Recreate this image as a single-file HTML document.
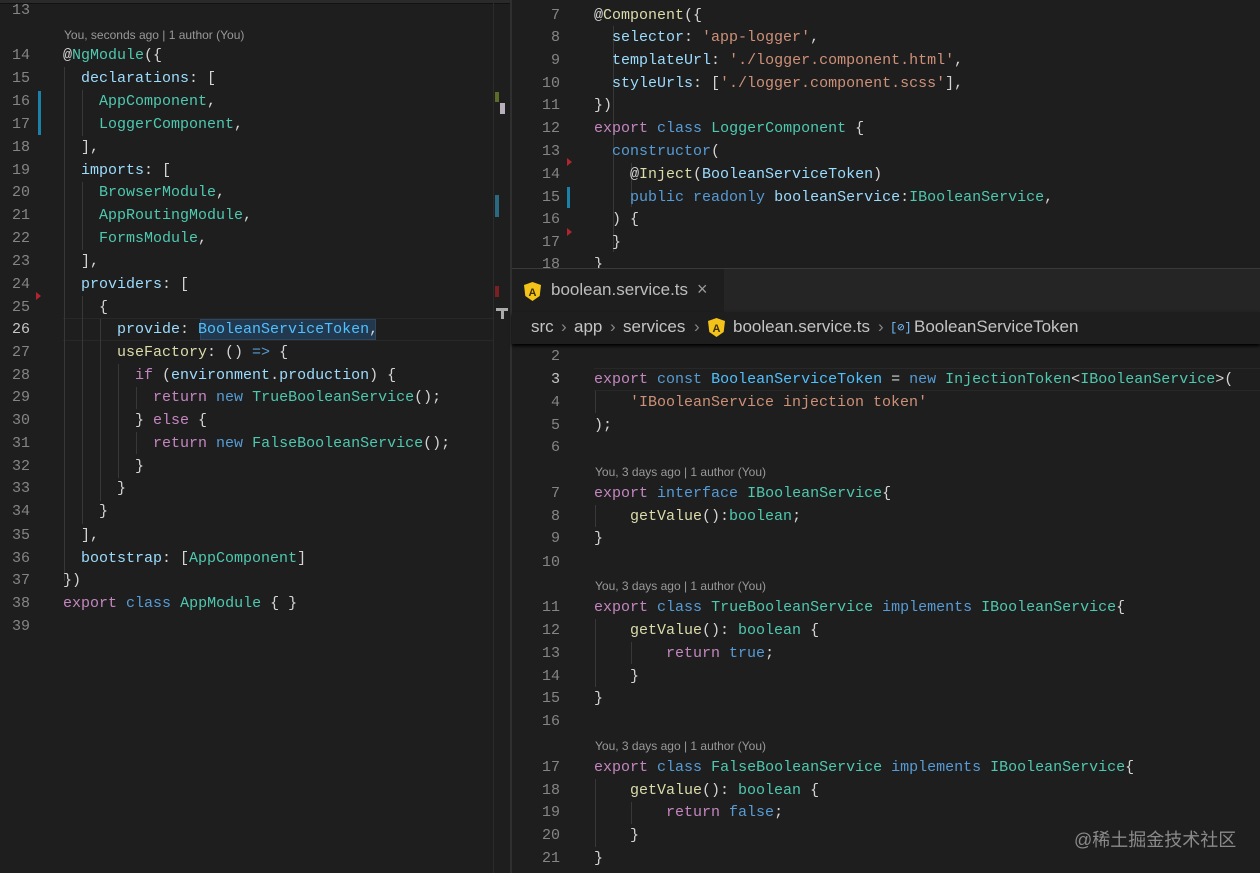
<!DOCTYPE html>
<html><head><meta charset="utf-8"><style>
*{margin:0;padding:0;box-sizing:border-box}
body{width:1260px;height:873px;background:#1e1e1e;position:relative;overflow:hidden;font-family:"Liberation Mono",monospace;font-size:15px;color:#d4d4d4}
.l{position:absolute;height:23px;line-height:23px;white-space:pre}
.n{position:absolute;height:23px;line-height:23px;color:#858585;text-align:right;width:30px}
.lens{position:absolute;font-family:"Liberation Sans",sans-serif;font-size:12px;color:#999;line-height:16px}
.k{color:#c586c0}.b{color:#569cd6}.t{color:#4ec9b0}.p{color:#9cdcfe}.f{color:#dcdcaa}.s{color:#ce9178}
.g{position:absolute;width:1px;background:#383838}
.bc{position:absolute;top:317px;font-family:'Liberation Sans',sans-serif;font-size:17px;color:#c4c4c4;white-space:pre}
.sep{position:absolute;top:317px;font-family:'Liberation Sans',sans-serif;font-size:17px;color:#888}
</style></head><body>
<!-- left pane -->
<div style="position:absolute;left:0;top:0;width:510px;height:4px;background:#2a2a2a"></div>
<div style="position:absolute;left:0;top:3px;width:510px;height:1px;background:#111"></div>
<div style="position:absolute;left:493px;top:0;width:1px;height:873px;background:#2b2b2b"></div>
<div style="position:absolute;left:510px;top:0;width:2px;height:873px;background:#2f2f2f"></div>
<div style="position:absolute;left:38px;top:91px;width:3px;height:44px;background:#1b81a8"></div>
<div style="position:absolute;left:495px;top:92px;width:4px;height:10px;background:#5b6b2a"></div>
<div style="position:absolute;left:500px;top:103px;width:5px;height:11px;background:#b9b0bd"></div>
<div style="position:absolute;left:495px;top:195px;width:4px;height:22px;background:#2a6a80"></div>
<div style="position:absolute;left:495px;top:286px;width:4px;height:11px;background:#7a2020"></div>
<div style="position:absolute;left:496px;top:308px;width:12px;height:3px;background:#aaa"></div>
<div style="position:absolute;left:501px;top:308px;width:3px;height:11px;background:#aaa"></div>
<div style="position:absolute;left:36px;top:292px;width:0;height:0;border-top:4px solid transparent;border-bottom:4px solid transparent;border-left:5px solid #b0262e"></div>
<div style="position:absolute;left:63px;top:318px;width:430px;height:23px;border-top:1px solid #282828;border-bottom:1px solid #282828"></div>
<div style="position:absolute;left:200px;top:319px;width:176px;height:21px;background:#264f78;opacity:.55;border:1px solid #3a6d99"></div>
<div class="g" style="left:64px;top:67px;height:514px"></div>
<div class="g" style="left:82px;top:90px;height:46px"></div>
<div class="g" style="left:82px;top:182px;height:68px"></div>
<div class="g" style="left:82px;top:296px;height:228px"></div>
<div class="g" style="left:100px;top:319px;height:182px"></div>
<div class="g" style="left:118px;top:364px;height:114px"></div>
<div class="g" style="left:136px;top:387px;height:22px"></div>
<div class="g" style="left:136px;top:432px;height:22px"></div>

<div class="n" style="top:-1px">13</div>
<div class="lens" style="left:64px;top:27px">You, seconds ago | 1 author (You)</div>
<div class="n" style="top:44px">14</div><div class="l" style="left:63px;top:44px">@<span class="t">NgModule</span>({</div>
<div class="n" style="top:67px">15</div><div class="l" style="left:63px;top:67px">  <span class="p">declarations</span>: [</div>
<div class="n" style="top:90px">16</div><div class="l" style="left:63px;top:90px">    <span class="t">AppComponent</span>,</div>
<div class="n" style="top:113px">17</div><div class="l" style="left:63px;top:113px">    <span class="t">LoggerComponent</span>,</div>
<div class="n" style="top:136px">18</div><div class="l" style="left:63px;top:136px">  ],</div>
<div class="n" style="top:159px">19</div><div class="l" style="left:63px;top:159px">  <span class="p">imports</span>: [</div>
<div class="n" style="top:181px">20</div><div class="l" style="left:63px;top:181px">    <span class="t">BrowserModule</span>,</div>
<div class="n" style="top:204px">21</div><div class="l" style="left:63px;top:204px">    <span class="t">AppRoutingModule</span>,</div>
<div class="n" style="top:227px">22</div><div class="l" style="left:63px;top:227px">    <span class="t">FormsModule</span>,</div>
<div class="n" style="top:250px">23</div><div class="l" style="left:63px;top:250px">  ],</div>
<div class="n" style="top:273px">24</div><div class="l" style="left:63px;top:273px">  <span class="p">providers</span>: [</div>
<div class="n" style="top:296px">25</div><div class="l" style="left:63px;top:296px">    {</div>
<div class="n" style="top:318px;color:#c6c6c6">26</div><div class="l" style="left:63px;top:318px">      <span class="p">provide</span>: <span class="p" style="color:#4fc1ff">BooleanServiceToken</span>,</div>
<div class="n" style="top:341px">27</div><div class="l" style="left:63px;top:341px">      <span class="f">useFactory</span>: () <span class="b">=&gt;</span> {</div>
<div class="n" style="top:364px">28</div><div class="l" style="left:63px;top:364px">        <span class="k">if</span> (<span class="p">environment</span>.<span class="p">production</span>) {</div>
<div class="n" style="top:386px">29</div><div class="l" style="left:63px;top:386px">          <span class="k">return</span> <span class="b">new</span> <span class="t">TrueBooleanService</span>();</div>
<div class="n" style="top:409px">30</div><div class="l" style="left:63px;top:409px">        } <span class="k">else</span> {</div>
<div class="n" style="top:432px">31</div><div class="l" style="left:63px;top:432px">          <span class="k">return</span> <span class="b">new</span> <span class="t">FalseBooleanService</span>();</div>
<div class="n" style="top:455px">32</div><div class="l" style="left:63px;top:455px">        }</div>
<div class="n" style="top:477px">33</div><div class="l" style="left:63px;top:477px">      }</div>
<div class="n" style="top:500px">34</div><div class="l" style="left:63px;top:500px">    }</div>
<div class="n" style="top:524px">35</div><div class="l" style="left:63px;top:524px">  ],</div>
<div class="n" style="top:547px">36</div><div class="l" style="left:63px;top:547px">  <span class="p">bootstrap</span>: [<span class="t">AppComponent</span>]</div>
<div class="n" style="top:569px">37</div><div class="l" style="left:63px;top:569px">})</div>
<div class="n" style="top:592px">38</div><div class="l" style="left:63px;top:592px"><span class="k">export</span> <span class="b">class</span> <span class="t">AppModule</span> { }</div>
<div class="n" style="top:615px">39</div>

<!-- right top pane -->
<div style="position:absolute;left:512px;top:0;width:748px">
<div class="g" style="left:101px;top:26px;height:226px"></div>
<div class="g" style="left:119px;top:163px;height:44px"></div>
</div>
<div style="position:absolute;left:567px;top:187px;width:3px;height:21px;background:#1b81a8"></div>
<div style="position:absolute;left:567px;top:158px;width:0;height:0;border-top:4px solid transparent;border-bottom:4px solid transparent;border-left:5px solid #b0262e"></div>
<div style="position:absolute;left:567px;top:228px;width:0;height:0;border-top:4px solid transparent;border-bottom:4px solid transparent;border-left:5px solid #b0262e"></div>
<div class="n" style="left:530px;top:4px">7</div><div class="l" style="left:594px;top:4px">@<span class="f">Component</span>({</div>
<div class="n" style="left:530px;top:26px">8</div><div class="l" style="left:594px;top:26px">  <span class="p">selector</span>: <span class="s">'app-logger'</span>,</div>
<div class="n" style="left:530px;top:49px">9</div><div class="l" style="left:594px;top:49px">  <span class="p">templateUrl</span>: <span class="s">'./logger.component.html'</span>,</div>
<div class="n" style="left:530px;top:72px">10</div><div class="l" style="left:594px;top:72px">  <span class="p">styleUrls</span>: [<span class="s">'./logger.component.scss'</span>],</div>
<div class="n" style="left:530px;top:94px">11</div><div class="l" style="left:594px;top:94px">})</div>
<div class="n" style="left:530px;top:117px">12</div><div class="l" style="left:594px;top:117px"><span class="k">export</span> <span class="b">class</span> <span class="t">LoggerComponent</span> {</div>
<div class="n" style="left:530px;top:140px">13</div><div class="l" style="left:594px;top:140px">  <span class="b">constructor</span>(</div>
<div class="n" style="left:530px;top:163px">14</div><div class="l" style="left:594px;top:163px">    @<span class="f">Inject</span>(<span class="p">BooleanServiceToken</span>)</div>
<div class="n" style="left:530px;top:186px">15</div><div class="l" style="left:594px;top:186px">    <span class="b">public</span> <span class="b">readonly</span> <span class="p">booleanService</span>:<span class="t">IBooleanService</span>,</div>
<div class="n" style="left:530px;top:208px">16</div><div class="l" style="left:594px;top:208px">  ) {</div>
<div class="n" style="left:530px;top:231px">17</div><div class="l" style="left:594px;top:231px">  }</div>
<div class="n" style="left:530px;top:253px">18</div><div class="l" style="left:594px;top:253px">}</div>

<!-- tab bar -->
<div style="position:absolute;left:512px;top:268px;width:748px;height:44px;background:#252526;border-top:1px solid #3a3a3a"></div>
<div style="position:absolute;left:512px;top:269px;width:212px;height:43px;background:#1e1e1e"></div>
<svg style="position:absolute;left:524px;top:282px" width="17" height="19" viewBox="0 0 17 19"><path d="M8.5 0L17 3l-1.3 11L8.5 19 1.3 14 0 3z" fill="#f4c31a"/><text x="8.5" y="14" font-family="Liberation Sans" font-size="11" font-weight="bold" text-anchor="middle" fill="#3a2d00">A</text></svg>
<div style="position:absolute;left:551px;top:280px;font-family:'Liberation Sans',sans-serif;font-size:17px;color:#bdbdbd">boolean.service.ts</div>
<div style="position:absolute;left:697px;top:279px;font-family:'Liberation Sans',sans-serif;font-size:18px;color:#9a9a9a">×</div>
<!-- breadcrumb -->
<div style="position:absolute;left:512px;top:312px;width:748px;height:32px;background:#1e1e1e;box-shadow:0 2px 3px #000"></div>
<div class="bc" style="left:531px">src</div><div class="sep" style="left:561px">›</div>
<div class="bc" style="left:574px">app</div><div class="sep" style="left:610px">›</div>
<div class="bc" style="left:623px">services</div><div class="sep" style="left:694px">›</div>
<svg style="position:absolute;left:708px;top:318px" width="17" height="19" viewBox="0 0 17 19"><path d="M8.5 0L17 3l-1.3 11L8.5 19 1.3 14 0 3z" fill="#f4c31a"/><text x="8.5" y="14" font-family="Liberation Sans" font-size="11" font-weight="bold" text-anchor="middle" fill="#3a2d00">A</text></svg>
<div class="bc" style="left:733px">boolean.service.ts</div><div class="sep" style="left:878px">›</div>
<div style="position:absolute;left:890px;top:320px;font-size:12px;color:#75beff">[⊘]</div>
<div class="bc" style="left:914px">BooleanServiceToken</div>

<!-- right bottom pane -->
<div style="position:absolute;left:594px;top:368px;width:666px;height:23px;border-top:1px solid #282828;border-bottom:1px solid #282828"></div>
<div class="g" style="left:595px;top:391px;height:22px"></div>
<div class="g" style="left:595px;top:505px;height:22px"></div>
<div class="g" style="left:595px;top:619px;height:68px"></div>
<div class="g" style="left:631px;top:642px;height:22px"></div>
<div class="g" style="left:595px;top:779px;height:68px"></div>
<div class="g" style="left:631px;top:802px;height:22px"></div>
<div class="n" style="left:530px;top:345px">2</div>
<div class="n" style="left:530px;top:368px;color:#c6c6c6">3</div><div class="l" style="left:594px;top:368px"><span class="k">export</span> <span class="b">const</span> <span class="p" style="color:#4fc1ff">BooleanServiceToken</span> = <span class="b">new</span> <span class="t">InjectionToken</span>&lt;<span class="t">IBooleanService</span>&gt;(</div>
<div class="n" style="left:530px;top:391px">4</div><div class="l" style="left:594px;top:391px">    <span class="s">'IBooleanService injection token'</span></div>
<div class="n" style="left:530px;top:414px">5</div><div class="l" style="left:594px;top:414px">);</div>
<div class="n" style="left:530px;top:436px">6</div>
<div class="lens" style="left:595px;top:464px">You, 3 days ago | 1 author (You)</div>
<div class="n" style="left:530px;top:482px">7</div><div class="l" style="left:594px;top:482px"><span class="k">export</span> <span class="b">interface</span> <span class="t">IBooleanService</span>{</div>
<div class="n" style="left:530px;top:505px">8</div><div class="l" style="left:594px;top:505px">    <span class="f">getValue</span>():<span class="t">boolean</span>;</div>
<div class="n" style="left:530px;top:527px">9</div><div class="l" style="left:594px;top:527px">}</div>
<div class="n" style="left:530px;top:551px">10</div>
<div class="lens" style="left:595px;top:578px">You, 3 days ago | 1 author (You)</div>
<div class="n" style="left:530px;top:596px">11</div><div class="l" style="left:594px;top:596px"><span class="k">export</span> <span class="b">class</span> <span class="t">TrueBooleanService</span> <span class="b">implements</span> <span class="t">IBooleanService</span>{</div>
<div class="n" style="left:530px;top:619px">12</div><div class="l" style="left:594px;top:619px">    <span class="f">getValue</span>(): <span class="t">boolean</span> {</div>
<div class="n" style="left:530px;top:642px">13</div><div class="l" style="left:594px;top:642px">        <span class="k">return</span> <span class="b">true</span>;</div>
<div class="n" style="left:530px;top:665px">14</div><div class="l" style="left:594px;top:665px">    }</div>
<div class="n" style="left:530px;top:687px">15</div><div class="l" style="left:594px;top:687px">}</div>
<div class="n" style="left:530px;top:710px">16</div>
<div class="lens" style="left:595px;top:738px">You, 3 days ago | 1 author (You)</div>
<div class="n" style="left:530px;top:756px">17</div><div class="l" style="left:594px;top:756px"><span class="k">export</span> <span class="b">class</span> <span class="t">FalseBooleanService</span> <span class="b">implements</span> <span class="t">IBooleanService</span>{</div>
<div class="n" style="left:530px;top:779px">18</div><div class="l" style="left:594px;top:779px">    <span class="f">getValue</span>(): <span class="t">boolean</span> {</div>
<div class="n" style="left:530px;top:801px">19</div><div class="l" style="left:594px;top:801px">        <span class="k">return</span> <span class="b">false</span>;</div>
<div class="n" style="left:530px;top:824px">20</div><div class="l" style="left:594px;top:824px">    }</div>
<div class="n" style="left:530px;top:847px">21</div><div class="l" style="left:594px;top:847px">}</div>
<div style="position:absolute;left:1074px;top:826px;font-family:'Liberation Sans','Noto Sans CJK SC',sans-serif;font-size:18px;color:#8a8a8a">@稀土掘金技术社区</div>
</body></html>
